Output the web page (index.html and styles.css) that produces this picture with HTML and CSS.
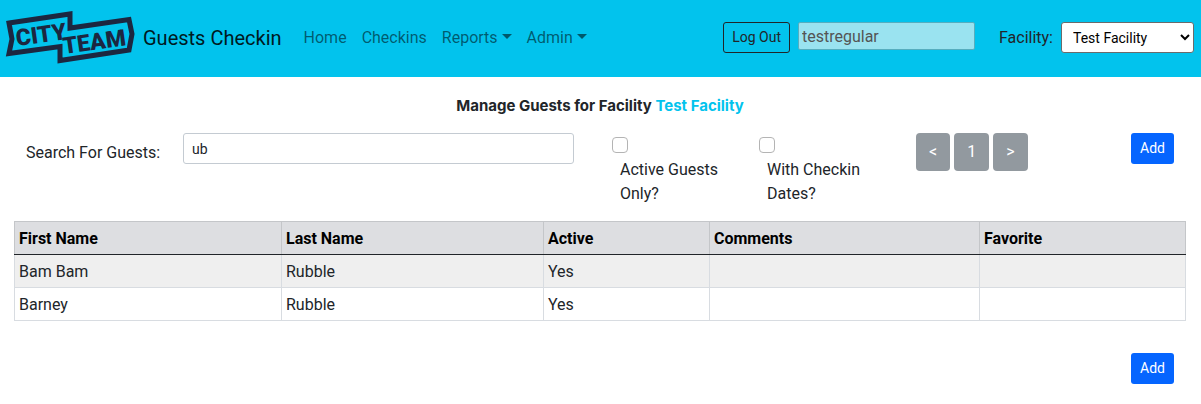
FILE: index.html
```html
<!DOCTYPE html>
<html lang="en">
<head>
<meta charset="utf-8">
<title>Guests Checkin</title>
<link rel="stylesheet" href="styles.css">
</head>
<body>
<header class="navbar">
  <a class="brand" href="#">
    <svg class="logo" viewBox="-1 2 130 56" role="img" aria-label="City Team">
      <path class="logo-frame" d="M3 15 L64 6 V20 L123 11.500 L126 26 L123 42 L54 52.500 V38.500 L3 45.500 L6 31 Z"/>
      <text class="logo-text" transform="translate(11 38) rotate(-8)">CITY</text>
      <text class="logo-text" transform="translate(58 46) rotate(-8)">TEAM</text>
    </svg>
    <span>Guests Checkin</span>
  </a>
  <nav class="links">
    <a href="#">Home</a>
    <a href="#">Checkins</a>
    <a class="dropdown" href="#">Reports</a>
    <a class="dropdown" href="#">Admin</a>
  </nav>
  <form class="account">
    <button class="btn btn-outline" type="button">Log Out</button>
    <input class="user" type="text" value="testregular" aria-label="User" disabled>
    <label class="facility-label" for="facility">Facility:</label>
    <select class="facility" id="facility"><option>Test Facility</option></select>
  </form>
</header>
<main class="content">
  <h1 class="title">Manage Guests for Facility <span class="accent">Test Facility</span></h1>
  <div class="filters">
    <label class="search-label" for="search">Search For Guests:</label>
    <input class="search" id="search" type="text" value="ub">
    <div class="check">
      <input type="checkbox" id="active">
      <label for="active">Active Guests Only?</label>
    </div>
    <div class="check">
      <input type="checkbox" id="dates">
      <label for="dates">With Checkin Dates?</label>
    </div>
    <div class="pager">
      <button class="page" type="button">&lt;</button>
      <button class="page" type="button">1</button>
      <button class="page" type="button">&gt;</button>
    </div>
    <button class="btn btn-primary" type="button">Add</button>
  </div>
  <table class="guests">
    <colgroup><col class="first"><col class="last"><col class="active"><col class="comments"><col></colgroup>
    <thead>
      <tr><th>First Name</th><th>Last Name</th><th>Active</th><th>Comments</th><th>Favorite</th></tr>
    </thead>
    <tbody>
      <tr><td>Bam Bam</td><td>Rubble</td><td>Yes</td><td></td><td></td></tr>
      <tr><td>Barney</td><td>Rubble</td><td>Yes</td><td></td><td></td></tr>
    </tbody>
  </table>
  <div class="footer">
    <button class="btn btn-primary" type="button">Add</button>
  </div>
</main>
</body>
</html>
```
FILE: styles.css
```css
* { box-sizing: border-box; }

body {
  margin: 0;
  background: #fff;
  color: #212529;
  font: 16px/24px Roboto, Inter, sans-serif;
}

input, button, select { margin: 0; font: inherit; color: inherit; }

.navbar {
  display: flex;
  align-items: center;
  min-height: 77px;
  padding: 0 7px 2px 5px;
  background: #02c3ed;
}

.brand {
  display: flex;
  align-items: center;
  gap: 8px;
  margin-right: 22px;
  color: #001a1f;
  font-size: 20px;
  text-decoration: none;
  white-space: nowrap;
}

.logo { width: 130px; height: 56px; }
.logo-frame { fill: none; stroke: #1c2740; stroke-width: 5; }
.logo-text {
  fill: #1c2740;
  font: 900 23px Roboto, sans-serif;
}

.links { display: flex; gap: 15px; }
.links a { color: rgba(0, 0, 0, 0.55); text-decoration: none; white-space: nowrap; }
.dropdown::after {
  content: "";
  display: inline-block;
  margin-left: 4px;
  vertical-align: 4px;
  border: 5px solid transparent;
  border-top-color: currentColor;
  border-bottom: 0;
}

.account { display: flex; align-items: center; margin-left: auto; }

.btn {
  height: 31px;
  padding: 0 8px;
  border: 1px solid transparent;
  border-radius: 3px;
  font-size: 14px;
  line-height: 21px;
  white-space: nowrap;
}
.btn-outline { border-color: #212529; background: transparent; }
.btn-primary { justify-self: end; background: #0565ff; color: #fff; }

.user {
  align-self: flex-start;
  width: 177px;
  height: 28px;
  margin-left: 8px;
  padding: 0 3px;
  border: 1px solid #56aebf;
  border-radius: 2px;
  background: #9ae3f0;
  color: #545454;
}
.facility-label { margin: 0 8px 0 24px; }
.facility {
  width: 133px;
  height: 31px;
  padding: 0 0 0 7px;
  border: 1px solid #6b6b6b;
  border-radius: 3px;
  background: #fff;
  color: #000;
  font-size: 14px;
}

.content { padding: 17px 15px 20px 14px; }
.title { margin: 0 0 15px; font: bold 15px/24px Inter, Roboto, sans-serif; text-align: center; }
.accent { color: #02c3ed; }

.filters {
  display: grid;
  grid-template-columns: minmax(0, 133fr) 391fr 123fr 123fr 140fr 118fr;
  column-gap: 24px;
  align-items: start;
  padding: 0 12px;
}
.search-label { padding-top: 8px; white-space: nowrap; }
.search {
  width: 100%;
  height: 31px;
  padding: 0 8px;
  border: 1px solid #c4cbd2;
  border-radius: 3px;
  font-size: 14px;
}
.check { padding: 4px 0 0 14px; }
.check input {
  display: block;
  appearance: none;
  width: 16px;
  height: 16px;
  margin-bottom: 5px;
  border: 1px solid #b4b4b4;
  border-radius: 4px;
  background: #fff;
}
.check label { display: block; padding-left: 8px; }
.pager { display: flex; gap: 4px; padding-left: 24px; }
.page {
  height: 38px;
  padding: 0 13px;
  border: 0;
  border-radius: 4px;
  background: #92999f;
  color: #fff;
}

.guests {
  width: 100%;
  margin-top: 15px;
  border-collapse: collapse;
  table-layout: fixed;
}
.first { width: 267px; }
.last { width: 262px; }
.active { width: 166px; }
.comments { width: 270px; }
.guests th, .guests td {
  height: 33px;
  padding: 5px 4px 3px;
  border: 1px solid #d8dce1;
  text-align: left;
}
.guests th {
  border-color: #c4c6c9;
  border-bottom-color: #212529;
  background: #dddee1;
  color: #000;
}
.guests tbody tr:nth-child(odd) { background: #efefef; }

.footer { display: flex; justify-content: flex-end; padding: 32px 12px 0; }
```
